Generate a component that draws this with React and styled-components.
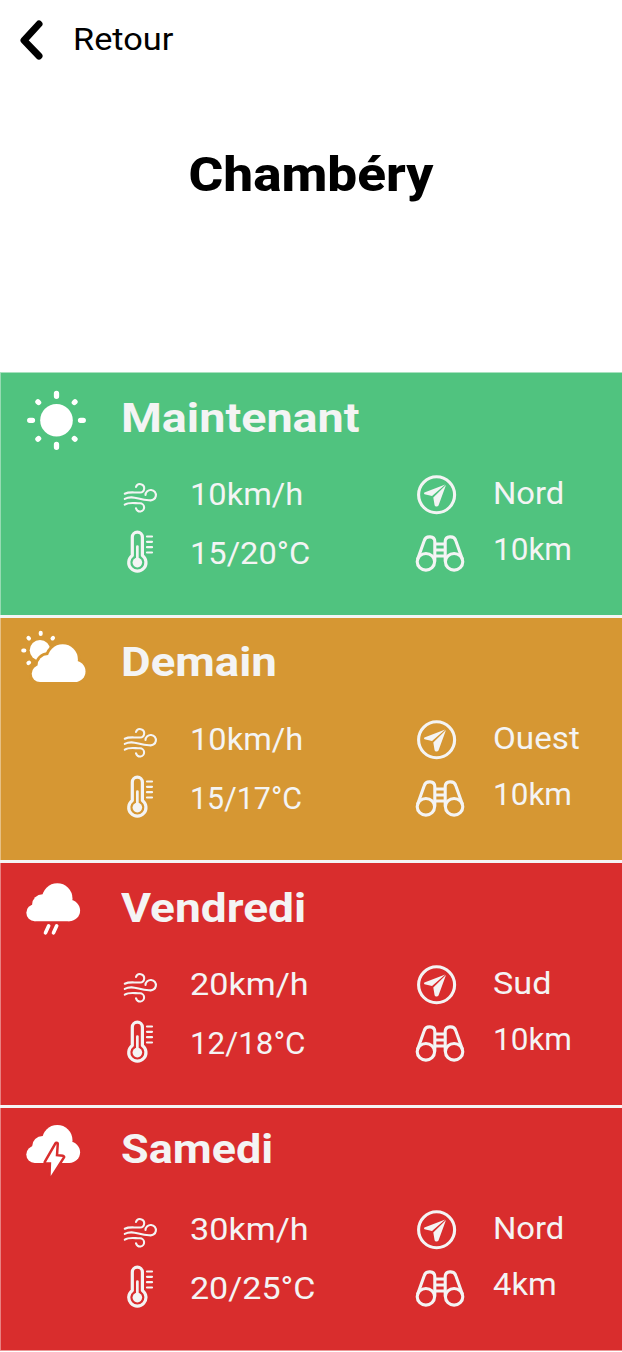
import React from "react";
import styled, { createGlobalStyle } from "styled-components";

const Global = createGlobalStyle`
  *{box-sizing:border-box}
  body{margin:0;background:#fff;font-family:Roboto,"Liberation Sans",sans-serif;color:#000}
  h1,h2,p{margin:0}
`;
const Screen = styled.main`display:flex;flex-direction:column;width:622px;height:1352px;overflow:hidden;background:#fff;`;
const BackBar = styled.button`
  display:flex;align-items:center;height:80px;padding:0 0 0 19px;border:0;background:none;font:inherit;color:#000;text-align:left;
  svg{width:24px;height:40px;margin-right:30px;display:block}
`;
const Label = styled.span`
  display:block;white-space:nowrap;font-size:31.5px;line-height:40px;
  transform:scaleX(${p => p.$stretch || 1});transform-origin:left;
`;
const City = styled.h1`
  height:292px;flex:none;padding-top:65px;text-align:center;font-size:48.5px;line-height:60px;font-weight:800;
  transform:scaleX(1.095);
`;
const Forecasts = styled.section`
  display:flex;flex-direction:column;gap:3.5px;background:#f4f4f4;
  border-top:1px solid #a8e1bf;border-bottom:1px solid #ec9696;
`;
const Card = styled.article`
  height:241.6px;flex:none;display:grid;grid-template-columns:121px 1fr;grid-template-rows:90px 1fr;
  background:${p => p.$color};color:#f4f4f4;border-left:1px solid rgba(255,255,255,.4);
`;
const Sky = styled.div`svg{display:block;width:100px;height:90px;margin-left:9px}`;
const Day = styled.h2`
  justify-self:start;margin-left:-1.5px;font-size:41.5px;line-height:50px;font-weight:700;padding-top:${p => p.$top}px;white-space:nowrap;
  transform:scaleX(${p => p.$stretch});transform-origin:left;
`;
const Metrics = styled.div`
  grid-column:2;display:grid;grid-template-columns:293px 1fr;
`;
const Column = styled.div`display:flex;flex-direction:column;gap:${p => p.$gap}px;padding-top:${p => p.$top}px;`;
const Metric = styled.div`
  display:flex;height:40px;
  svg{display:block;flex:none;width:50px;height:46px;margin-right:${p => p.$space}px;margin-top:${p => p.$drop || 0}px}
`;

const Wind = () => (
  <svg viewBox="0 0 50 46" fill="none" stroke="currentColor" strokeWidth="2.1" strokeLinecap="round">
    <path d="M2.8 19.7C7 17.500 11 18.700 18 18.500a4.200 4.200 0 1 0-4-5.500" />
    <path d="M2.800 24.900C11 20.500 17 26.500 27.500 26.200a5.200 5.200 0 1 0-4-5.200" />
    <path d="M2.800 30.600C7 28 12 29.300 18 29.300a4.100 4.100 0 1 1-4 5" />
  </svg>
);
const Thermo = () => (
  <svg viewBox="0 0 50 46" fill="none" stroke="currentColor" strokeLinecap="round">
    <path d="M10.300 26.500V8.200a5.050 5.050 0 0 1 10.100 0V26.500a8.600 8.600 0 1 1-10.100 0Z" strokeWidth="3.200" strokeLinejoin="round" />
    <path d="M15.350 17.500v14" strokeWidth="2.700" /><circle cx="15.350" cy="33.600" r="4.800" fill="currentColor" stroke="none" />
    <path d="M25 7.500h5M25 12.800h5M25 18.200h5M25 23.500h5" strokeWidth="2.200" />
  </svg>
);
const Compass = () => (
  <svg viewBox="0 0 50 46"><circle cx="21.600" cy="22.800" r="18" fill="none" stroke="currentColor" strokeWidth="3.100" />
    <path d="M30.300 12.500 9.400 20.500q-1 .9.100 1.700l7.500 1.700Z M31 13 18.300 25.500l1.300 7.800c.6 1.600 3.100 1.600 3.900.2Z" fill="currentColor" />
  </svg>
);
const Binoculars = () => (
  <svg viewBox="0 0 50 46" fill="none" stroke="currentColor" strokeWidth="3.100" strokeLinejoin="round">
    <ellipse cx="10.900" cy="31.800" rx="8.700" ry="8.300" /><ellipse cx="39.100" cy="31.800" rx="8.700" ry="8.300" />
    <path d="M2.600 29.200 9.300 10.500c1.500-5.200 10.500-4.700 10.500 1V31.500M47.400 29.200 40.700 10.500c-1.500-5.200-10.500-4.700-10.500 1V31.500M19.800 14h10.400M19.800 20h10.400M19.800 26h10.400" />
  </svg>
);
const Sun = () => (
  <svg viewBox="0 0 100 90"><circle cx="46.500" cy="47.300" r="16.300" fill="#fff" />
    <g stroke="#fff" strokeWidth="5.300" strokeLinecap="round">
      <path d="M46.500 20.500v2.800M46.500 71.500v2.800M19.700 47.300h2.800M70.500 47.300h2.800M27.900 28.800l.7.700M64.300 65.500l.7.700M65 28.800l-.7.700M28.600 65.500l-.7.700" />
    </g>
  </svg>
);
const Cloud = () => (
  <g>
    <circle cx="8.400" cy="29.500" r="8.400" />
    <circle cx="16.300" cy="21.400" r="10.500" />
    <circle cx="31" cy="15.200" r="15.200" />
    <circle cx="43.100" cy="27.200" r="10.700" />
    <path d="M8.400 20h34.700v17.900H8.400Z" />
  </g>
);
const PartlyCloudy = () => (
  <svg viewBox="0 0 100 90" fill="#fff"><circle cx="30" cy="32.300" r="10.300" />
    <g transform="translate(21.700 26.200)"><g fill="#d69733" stroke="#d69733" strokeWidth="5.500"><Cloud /></g><Cloud /></g>
    <g stroke="#fff" strokeWidth="4" strokeLinecap="round"><path d="M30.700 14.700v1.200M13.200 32.500h1.200M18.400 19.900l.6.600M43.100 19.900l-.6.600M18.400 45.100l.7-.6" /></g>
  </svg>
);
const Rain = () => (
  <svg viewBox="0 0 100 90" fill="#fff"><g transform="translate(16.300 20.300)"><Cloud /></g>
    <path d="m38.700 62.800-3.200 7M46.700 62.800l-3.200 7" stroke="#fff" strokeWidth="3.600" strokeLinecap="round" /></svg>
);
const bolt = "M46.500 35.900 36 54.300h5.200l-.5 13.600L52.800 49l-7.100-.7Z";
const Storm = () => (
  <svg viewBox="0 0 100 90" fill="#fff"><g transform="translate(16.300 17)"><Cloud /></g>
    <path d={bolt} fill="#d92d2d" stroke="#d92d2d" strokeWidth="5" strokeLinejoin="round" />
    <path d={bolt} /></svg>
);

const days = [
  { name: "Maintenant", stretch: 1.125, color: "#50c37f", Icon: Sun, top: 19.5, wind: ["10km/h", 1.035], temp: ["15/20°C", 1.035], dir: ["Nord", 1.04], view: ["10km", 1] },
  { name: "Demain", stretch: 1.1, color: "#d69733", Icon: PartlyCloudy, top: 18.5, wind: ["10km/h", 1.035], temp: ["15/17°C", 0.965], dir: ["Ouest", 1.055], view: ["10km", 1] },
  { name: "Vendredi", stretch: 1.11, color: "#d92d2d", Icon: Rain, top: 20, wind: ["20km/h", 1.085], temp: ["12/18°C", 0.995], dir: ["Sud", 1.085], view: ["10km", 1] },
  { name: "Samedi", stretch: 1.083, color: "#d92d2d", Icon: Storm, top: 15.5, wind: ["30km/h", 1.085], temp: ["20/25°C", 1.08], dir: ["Nord", 1.04], view: ["4km", 1.04] },
];

const Value = ({ of: [text, stretch] }) => <Label $stretch={stretch}>{text}</Label>;

export default function App() {
  return (
    <Screen><Global />
      <BackBar><svg viewBox="0 0 24 40"><path d="M20 4 5 20.300l15 15.700" fill="none" stroke="#000" strokeWidth="7" strokeLinecap="round" strokeLinejoin="round" /></svg><Label $stretch={1.09}>Retour</Label></BackBar>
      <City>Chambéry</City>
      <Forecasts>
        {days.map(({ name, stretch, color, Icon, top, wind, temp, dir, view }) => (
          <Card key={name} $color={color}>
            <Sky><Icon /></Sky>
            <Day $top={top} $stretch={stretch}>{name}</Day>
            <Metrics>
              <Column $top={12} $gap={19}>
                <Metric $space={18} $drop={-1}><Wind /><Value of={wind} /></Metric>
                <Metric $space={18} $drop={-5}><Thermo /><Value of={temp} /></Metric>
              </Column>
              <Column $top={10.5} $gap={16}>
                <Metric $space={28} $drop={-2}><Compass /><Value of={dir} /></Metric>
                <Metric $space={28}><Binoculars /><Value of={view} /></Metric>
              </Column>
            </Metrics>
          </Card>
        ))}
      </Forecasts>
    </Screen>
  );
}
